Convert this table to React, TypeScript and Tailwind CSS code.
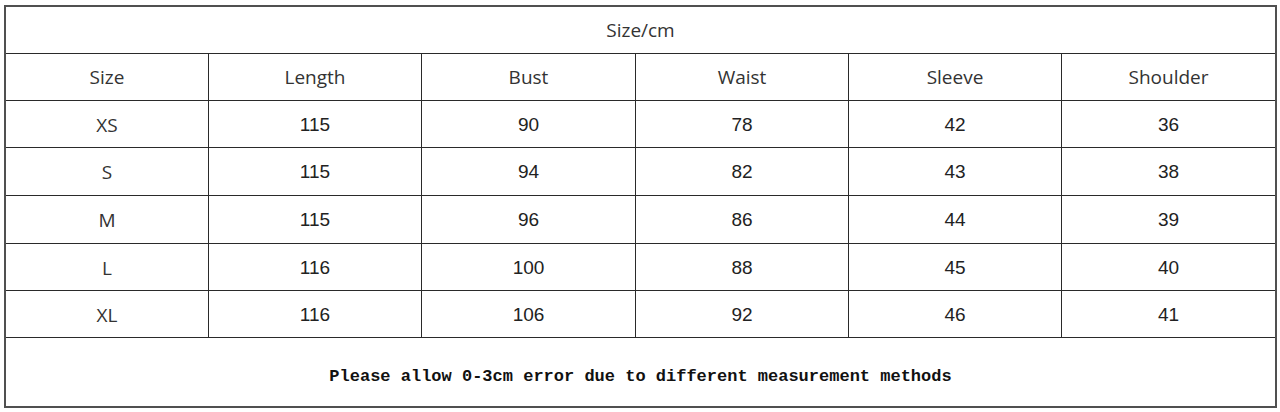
import React from "react";

const headers = ["Size", "Length", "Bust", "Waist", "Sleeve", "Shoulder"];
const rows = [
  ["XS", "115", "90", "78", "42", "36"],
  ["S", "115", "94", "82", "43", "38"],
  ["M", "115", "96", "86", "44", "39"],
  ["L", "116", "100", "88", "45", "40"],
  ["XL", "116", "106", "92", "46", "41"],
];
const rowH = ["h-[48px]", "h-[47px]", "h-[48px]", "h-[48px]", "h-[47px]", "h-[47px]"];

export default function App() {
  return (
    <div className="w-[1280px] h-[412px] bg-white pt-[5px] pl-[4px]">
      <div className="w-[1273px] border-2 border-[#505050] bg-white">
        <div className="h-[47px] border-b border-[#2a2a2a] flex items-center justify-center text-[19px] text-[#333]" style={{ fontFamily: '"Open Sans", sans-serif' }}>
          Size/cm
        </div>
        <div className="grid grid-cols-[203px_213px_214px_213px_213px_1fr]">
          {headers.map((h, i) => (
            <div
              key={h}
              className={`h-[47px] border-b border-[#2a2a2a] flex items-center justify-center text-[19px] text-[#333] ${i < 5 ? "border-r" : ""}`}
              style={{ fontFamily: '"Open Sans", sans-serif' }}
            >
              {h}
            </div>
          ))}
          {rows.map((r, ri) =>
            r.map((c, ci) => (
              <div
                key={ri + "-" + ci}
                className={`${rowH[ri + 1]} border-b border-[#2a2a2a] flex items-center justify-center pt-[2px] ${ci < 5 ? "border-r" : ""} ${ci === 0 ? "text-[19px] text-[#333]" : "text-[19px] text-[#222]"}`}
                style={{ fontFamily: ci === 0 ? '"Open Sans", sans-serif' : '"Liberation Sans", Arial, sans-serif' }}
              >
                {c}
              </div>
            ))
          )}
        </div>
        <div className="h-[68px] flex items-center justify-center pt-[10px]">
          <span className="text-[17px] font-bold text-[#111] whitespace-pre" style={{ fontFamily: '"Liberation Mono", monospace' }}>
            Please allow 0-3cm error due to different measurement methods
          </span>
        </div>
      </div>
    </div>
  );
}
